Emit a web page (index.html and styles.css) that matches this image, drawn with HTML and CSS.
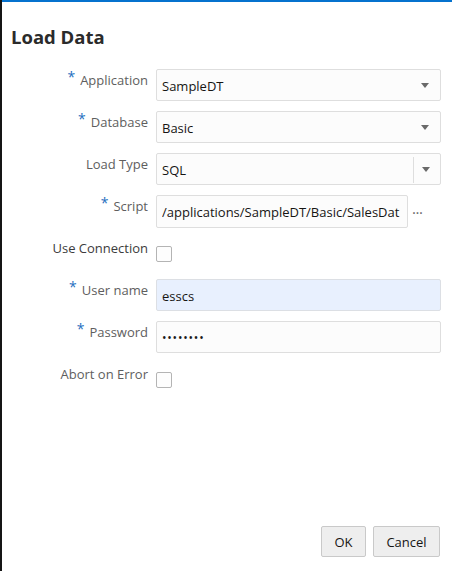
FILE: index.html
```html
<!DOCTYPE html>
<html lang="en">
<head>
<meta charset="utf-8">
<title>Load Data</title>
<link rel="stylesheet" href="styles.css">
</head>
<body>
<div class="dialog">
  <div class="topbar"></div>
  <h1 class="title">Load Data</h1>
  <form class="form">
    <label class="label"><span class="req">*</span>Application</label>
    <div class="field select"><span class="value">SampleDT</span><span class="arrow"></span></div>

    <label class="label"><span class="req">*</span>Database</label>
    <div class="field select"><span class="value">Basic</span><span class="arrow"></span></div>

    <label class="label">Load Type</label>
    <div class="field select combo"><span class="value">SQL</span><span class="arrowbox"><span class="arrow"></span></span></div>

    <label class="label"><span class="req">*</span>Script</label>
    <div class="scriptrow">
      <div class="field script"><span class="value clip">/applications/SampleDT/Basic/SalesDat</span></div>
      <span class="more">···</span>
    </div>

    <label class="label dark">Use Connection</label>
    <div class="checkrow"><span class="check"></span></div>

    <label class="label"><span class="req">*</span>User name</label>
    <div class="field filled"><span class="value">esscs</span></div>

    <label class="label"><span class="req">*</span>Password</label>
    <div class="field"><span class="value dots">••••••••</span></div>

    <label class="label">Abort on Error</label>
    <div class="checkrow"><span class="check"></span></div>
  </form>
  <div class="footer">
    <button class="btn ok" type="button">OK</button>
    <button class="btn cancel" type="button">Cancel</button>
  </div>
</div>
</body>
</html>
```
FILE: styles.css
```css
html, body {
  margin: 0;
  padding: 0;
  background: #ffffff;
}
body {
  font-family: "Open Sans", "Noto Sans", sans-serif;
  font-size: 13px;
  color: #161513;
}
.dialog {
  box-sizing: border-box;
  height: 571px;
  border-left: 2px solid #151515;
  display: flex;
  flex-direction: column;
  background: #ffffff;
}
.topbar {
  height: 2px;
  background: #0572ce;
}
.title {
  margin: 22px 0 0 9px;
  font-size: 18.5px;
  font-weight: 700;
  line-height: 25px;
  color: #2b2b2b;
}
.form {
  margin-top: 20px;
  display: grid;
  grid-template-columns: 146px 285px;
  grid-auto-rows: 32px;
  column-gap: 8px;
  row-gap: 10px;
}
.label {
  text-align: right;
  color: #5e5e5e;
  line-height: 18px;
  padding-top: 2px;
  white-space: nowrap;
}
.label.dark {
  color: #3c3c3c;
}
.req {
  color: #1f6fc0;
  font-size: 14px;
  margin-right: 5px;
  position: relative;
  top: -3px;
}
.field {
  box-sizing: border-box;
  height: 32px;
  border: 1px solid #dedede;
  border-radius: 2px;
  background: #fcfcfc;
  display: flex;
  align-items: center;
  padding-left: 5px;
  position: relative;
}
.value {
  line-height: 18px;
  padding-top: 2px;
}
.filled {
  background: #e8f0fe;
  border-color: #dcdfe4;
}
.arrow {
  position: absolute;
  right: 11px;
  top: 13px;
  width: 0;
  height: 0;
  border-left: 4px solid transparent;
  border-right: 4px solid transparent;
  border-top: 5px solid #6a6a6a;
}
.combo .arrowbox {
  position: absolute;
  right: 0;
  top: 3px;
  bottom: 1px;
  width: 26px;
  border-left: 1px solid #dedede;
}
.combo .arrowbox .arrow {
  right: 10px;
  top: 10px;
}
.scriptrow {
  display: flex;
  align-items: center;
}
.script {
  width: 252px;
  height: 33px;
  overflow: hidden;
  padding-right: 6px;
}
.clip {
  white-space: nowrap;
  overflow: hidden;
  display: block;
  width: 240px;
}
.more {
  margin-left: 4px;
  color: #6a6a6a;
  font-size: 15px;
  line-height: 18px;
  letter-spacing: -0.5px;
  padding-top: 2px;
}
.checkrow {
  display: flex;
  align-items: flex-start;
  padding-top: 9px;
}
.check {
  box-sizing: border-box;
  width: 16px;
  height: 16px;
  border: 1px solid #b4b4b4;
  border-radius: 2px;
  background: #fdfdfd;
}
.dots {
  font-size: 12px;
  letter-spacing: 0.8px;
  color: #1a1a1a;
}
.footer {
  margin-top: auto;
  display: flex;
  justify-content: flex-end;
  gap: 7px;
  padding: 0 12px 14px 0;
}
.btn {
  box-sizing: border-box;
  height: 31px;
  border: 1px solid #c9c9c9;
  border-radius: 2px;
  background: #eeeeee;
  font-family: "Open Sans", "Noto Sans", sans-serif;
  font-size: 13px;
  color: #161513;
  padding: 0;
}
.ok {
  width: 45px;
}
.cancel {
  width: 67px;
}
```
